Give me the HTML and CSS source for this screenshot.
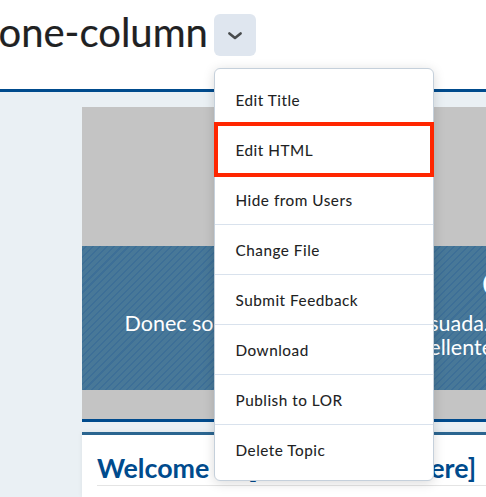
FILE: index.html
```html
<!DOCTYPE html>
<html lang="en">
<head>
<meta charset="utf-8">
<title>one-column</title>
<link rel="stylesheet" href="styles.css">
</head>
<body>
<header class="topbar">
  <h1 class="title">one-column</h1>
  <div class="actions">
    <button class="toggle" aria-label="Actions">
      <svg width="18" height="18" viewBox="0 0 18 18"><path d="M3.400 7.400 9 12l5.600-4.600" fill="none" stroke="#494c4e" stroke-width="2.600" stroke-linecap="round" stroke-linejoin="round"/></svg>
    </button>
    <ul class="menu">
      <li>Edit Title</li>
      <li class="highlight">Edit HTML</li>
      <li>Hide from Users</li>
      <li>Change File</li>
      <li>Submit Feedback</li>
      <li>Download</li>
      <li>Publish to LOR</li>
      <li>Delete Topic</li>
    </ul>
  </div>
</header>
<main class="page">
  <section class="banner">
    <div class="stripe">
      <h2 class="banner-title">Course</h2>
      <p class="line first">Donec sollicitudin molestie malesuada.</p>
      <p class="line second">Pellentesque</p>
    </div>
  </section>
  <section class="card">
    <h2 class="welcome"><span>Welcome to</span><span class="bracket">[Course</span><span class="tail">Here]</span></h2>
  </section>
</main>
</body>
</html>
```

FILE: styles.css
```css
* { box-sizing: border-box; }
body {
  margin: 0;
  height: 497px;
  overflow: hidden;
  background: #eaf0f4;
  font-family: Lato, sans-serif;
  color: #202122;
}
h1, h2, p, ul { margin: 0; padding: 0; font-weight: 400; }
.topbar {
  display: flex;
  height: 92px;
  padding-top: 14px;
  background: #fff;
  border-bottom: 3px solid #004b8d;
}
.title {
  width: 214px;
  margin-left: -1.500px;
  margin-right: 1.500px;
  margin-top: -2px;
  font-size: 40px;
  line-height: 40px;
  white-space: nowrap;
  -webkit-text-stroke: .2px;
}
.actions { position: relative; }
.toggle {
  display: flex;
  align-items: center;
  justify-content: center;
  width: 42px;
  height: 42px;
  padding: 0;
  border: 0;
  border-radius: 6px;
  background: #dfe6ef;
}
.menu {
  position: absolute;
  z-index: 2;
  top: 54px;
  left: 0;
  width: 220px;
  height: 413px;
  padding: 6px 0 5px;
  list-style: none;
  background: #fff;
  border: 1px solid #c5d0db;
  border-radius: 6px;
  box-shadow: 0 2px 12px rgba(0, 0, 0, .15);
}
.menu li {
  height: 50px;
  padding-left: 20.500px;
  font-size: 15.300px;
  letter-spacing: .52px;
  line-height: 50px;
  -webkit-text-stroke: .08px;
  border-bottom: 1px solid #d9e2ed;
}
.menu li:first-child { border-bottom: 0; }
.menu li:last-child { border-bottom: 0; }
.menu .highlight {
  height: 55px;
  margin: -3px -1px -2px;
  padding-left: 17.500px;
  line-height: 48px;
  border: 4px solid #ff2600;
}
.page { padding: 15px 0 0 82px; }
.banner {
  height: 315px;
  padding-top: 139px;
  background: #c4c4c4;
  border-bottom: 3px solid #004b8d;
}
.stripe {
  height: 144px;
  overflow: hidden;
  padding-top: 15px;
  color: #fff;
  background: repeating-linear-gradient(-45deg, #487898 0 3.500px, #3d6f97 3.500px 5px);
}
.banner-title {
  margin-left: 400px;
  font-size: 36px;
  font-weight: 700;
  line-height: 44px;
}
.line { font-size: 21.500px; line-height: 24px; white-space: nowrap; }
.first { margin: 6px 0 0 42.500px; }
.second { margin-left: 335px; }
.card {
  height: 65px;
  margin-top: 10px;
  padding: 17px 0 0 15px;
  background: #fff;
  border-top: 3px solid #2b6590;
  box-shadow: 0 0 5px rgba(0, 0, 0, .06);
}
.welcome {
  display: flex;
  height: 34px;
  font-size: 26.800px;
  font-weight: 700;
  line-height: 33px;
  white-space: nowrap;
  color: #004b8d;
  border-bottom: 1px solid #e4e4e4;
}
.welcome span:first-child { width: 151px; }
.bracket { width: 162px; }
```
